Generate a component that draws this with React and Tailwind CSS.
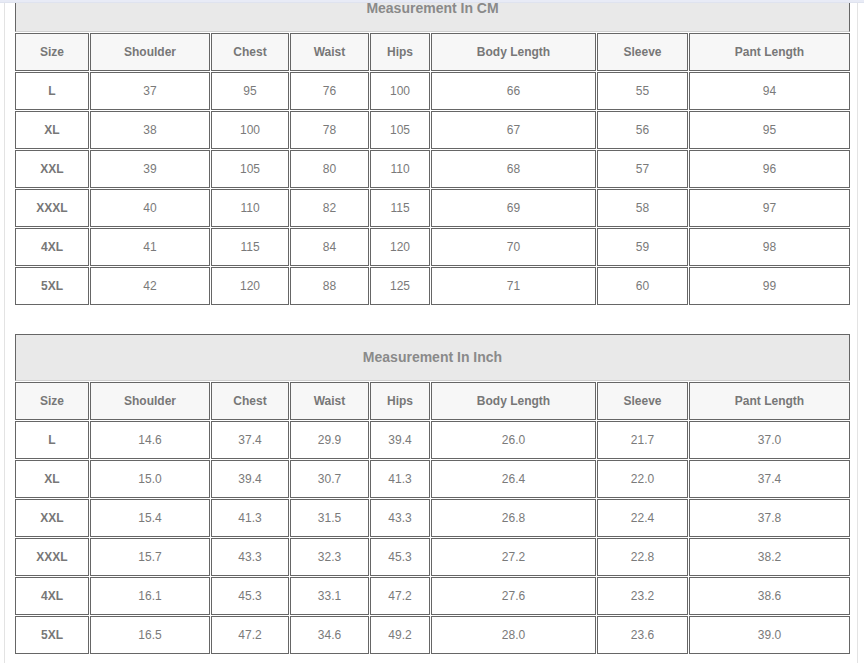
const cols = [
  { label: 'Size', w: 'w-[74px]' },
  { label: 'Shoulder', w: 'w-[120px]' },
  { label: 'Chest', w: 'w-[78px]' },
  { label: 'Waist', w: 'w-[79px]' },
  { label: 'Hips', w: 'w-[60px]' },
  { label: 'Body Length', w: 'w-[165px]' },
  { label: 'Sleeve', w: 'w-[91px]' },
  { label: 'Pant Length', w: 'w-[161px]' },
];

const cmRows = [
  ['L', '37', '95', '76', '100', '66', '55', '94'],
  ['XL', '38', '100', '78', '105', '67', '56', '95'],
  ['XXL', '39', '105', '80', '110', '68', '57', '96'],
  ['XXXL', '40', '110', '82', '115', '69', '58', '97'],
  ['4XL', '41', '115', '84', '120', '70', '59', '98'],
  ['5XL', '42', '120', '88', '125', '71', '60', '99'],
];

const inchRows = [
  ['L', '14.6', '37.4', '29.9', '39.4', '26.0', '21.7', '37.0'],
  ['XL', '15.0', '39.4', '30.7', '41.3', '26.4', '22.0', '37.4'],
  ['XXL', '15.4', '41.3', '31.5', '43.3', '26.8', '22.4', '37.8'],
  ['XXXL', '15.7', '43.3', '32.3', '45.3', '27.2', '22.8', '38.2'],
  ['4XL', '16.1', '45.3', '33.1', '47.2', '27.6', '23.2', '38.6'],
  ['5XL', '16.5', '47.2', '34.6', '49.2', '28.0', '23.6', '39.0'],
];

function SizeTable({ title, rows, className }) {
  return (
    <div className={`border border-[#666] ${className}`}>
      <table className="m-[-1px] table-fixed border-separate border-spacing-[1px] bg-white">
        <thead>
          <tr>
            <th
              colSpan={8}
              className="h-[47px] border border-[#666] border-b-[#cfcfcf] bg-[#e9e9e9] text-center text-[14px] font-bold text-[#8a8a8a]"
            >
              {title}
            </th>
          </tr>
          <tr>
            {cols.map(c => (
              <th
                key={c.label}
                className={`${c.w} h-[38px] border border-[#666] bg-[#f7f7f7] text-center text-[12px] font-bold text-[#777]`}
              >
                {c.label}
              </th>
            ))}
          </tr>
        </thead>
        <tbody>
          {rows.map(r => (
            <tr key={r[0]}>
              {r.map((v, i) => (
                <td
                  key={i}
                  className={`h-[38px] border border-[#666] text-center text-[12px] ${
                    i === 0 ? 'font-bold text-[#777]' : 'text-[#7a7a7a]'
                  }`}
                >
                  {v}
                </td>
              ))}
            </tr>
          ))}
        </tbody>
      </table>
    </div>
  );
}

export default function App() {
  return (
    <div className="relative h-[663px] overflow-hidden bg-white font-['Liberation_Sans',Arial,sans-serif]">
      {/* top strip of the viewer */}
      <div className="absolute inset-x-0 top-0 z-10 h-[3px] border-b border-[#dfe3ef] bg-[#e8ebf6]" />

      <div className="ml-[4px] w-[854px] min-h-[700px] border-x border-[#e3e3e3] pl-[9px] pr-[6px] pt-0">
        <SizeTable title="Measurement In CM" rows={cmRows} className="mt-[-16px]" />
        <SizeTable title="Measurement In Inch" rows={inchRows} className="mt-[27px]" />
      </div>
    </div>
  );
}
